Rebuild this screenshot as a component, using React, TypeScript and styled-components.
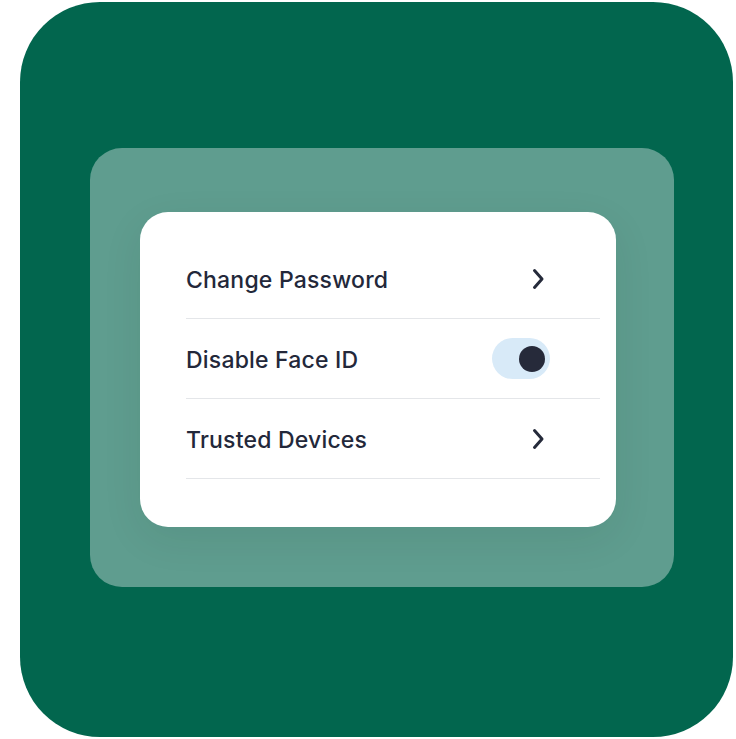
import React, { useState } from 'react'
import styled, { createGlobalStyle } from 'styled-components'

const GlobalStyle = createGlobalStyle`
  html, body {
    margin: 0;
    padding: 0;
    background: #ffffff;
  }
  body {
    font-family: Inter, 'Noto Sans', sans-serif;
  }
`

type RowItem = {
  label: string
  kind: 'link' | 'toggle'
}

const items: RowItem[] = [
  { label: 'Change Password', kind: 'link' },
  { label: 'Disable Face ID', kind: 'toggle' },
  { label: 'Trusted Devices', kind: 'link' },
]

const Chevron = () => (
  <ChevronSvg viewBox="0 0 14 22" width={14} height={22}>
    <path d="M3.5 2.5 L11 11 L3.5 19.5" fill="none" stroke="#252a3a" strokeWidth={3} strokeLinecap="round" strokeLinejoin="round" />
  </ChevronSvg>
)

export default function App() {
  const [faceIdOff, setFaceIdOff] = useState(true)

  return (
    <>
      <GlobalStyle />
      <Page>
        <OuterTile>
          <Panel>
            <Card>
              {items.map(item => (
                <Row key={item.label}>
                  <Label>{item.label}</Label>
                  <Trailing>
                    {item.kind === 'link' ? (
                      <Chevron />
                    ) : (
                      <Toggle $on={faceIdOff} onClick={() => setFaceIdOff(v => !v)} aria-label={item.label}>
                        <Knob $on={faceIdOff} />
                      </Toggle>
                    )}
                  </Trailing>
                </Row>
              ))}
            </Card>
          </Panel>
        </OuterTile>
      </Page>
    </>
  )
}

const Page = styled.div`
  width: 736px;
  height: 739px;
  padding: 2px 0 0 20px;
  box-sizing: border-box;
`

const OuterTile = styled.div`
  width: 713px;
  height: 735px;
  box-sizing: border-box;
  padding: 146px 59px 150px 70px;
  border-radius: 80px;
  background: #02664e;
`

const Panel = styled.div`
  width: 584px;
  height: 439px;
  box-sizing: border-box;
  padding: 64px 58px 60px 50px;
  border-radius: 32px;
  background: #5f9d8f;
`

const Card = styled.div`
  width: 476px;
  height: 315px;
  box-sizing: border-box;
  padding: 27px 16px 48px 46px;
  border-radius: 28px;
  background: #ffffff;
  box-shadow: 0 12px 40px rgba(0, 40, 30, 0.08);
  display: flex;
  flex-direction: column;
`

const Row = styled.div`
  height: 80px;
  box-sizing: border-box;
  border-bottom: 1.5px solid #e4e6e9;
  display: flex;
  align-items: center;
  justify-content: space-between;
`

const Label = styled.span`
  font-size: 23px;
  font-weight: 450;
  color: #23283a;
  letter-spacing: 0.2px;
  padding-top: 3px;
`

const Trailing = styled.div`
  width: 58px;
  margin-right: 50px;
  display: flex;
  justify-content: flex-end;
  align-items: center;
`

const ChevronSvg = styled.svg`
  display: block;
  margin-right: 5px;
`

const Toggle = styled.button<{ $on: boolean }>`
  width: 58px;
  height: 41px;
  border: none;
  padding: 0 5px;
  border-radius: 21px;
  background: ${p => (p.$on ? '#d8eaf8' : '#e4e6e9')};
  display: flex;
  align-items: center;
  justify-content: ${p => (p.$on ? 'flex-end' : 'flex-start')};
  cursor: pointer;
`

const Knob = styled.span<{ $on: boolean }>`
  width: 26px;
  height: 26px;
  border-radius: 50%;
  background: ${p => (p.$on ? '#262a3a' : '#9aa0ab')};
`
